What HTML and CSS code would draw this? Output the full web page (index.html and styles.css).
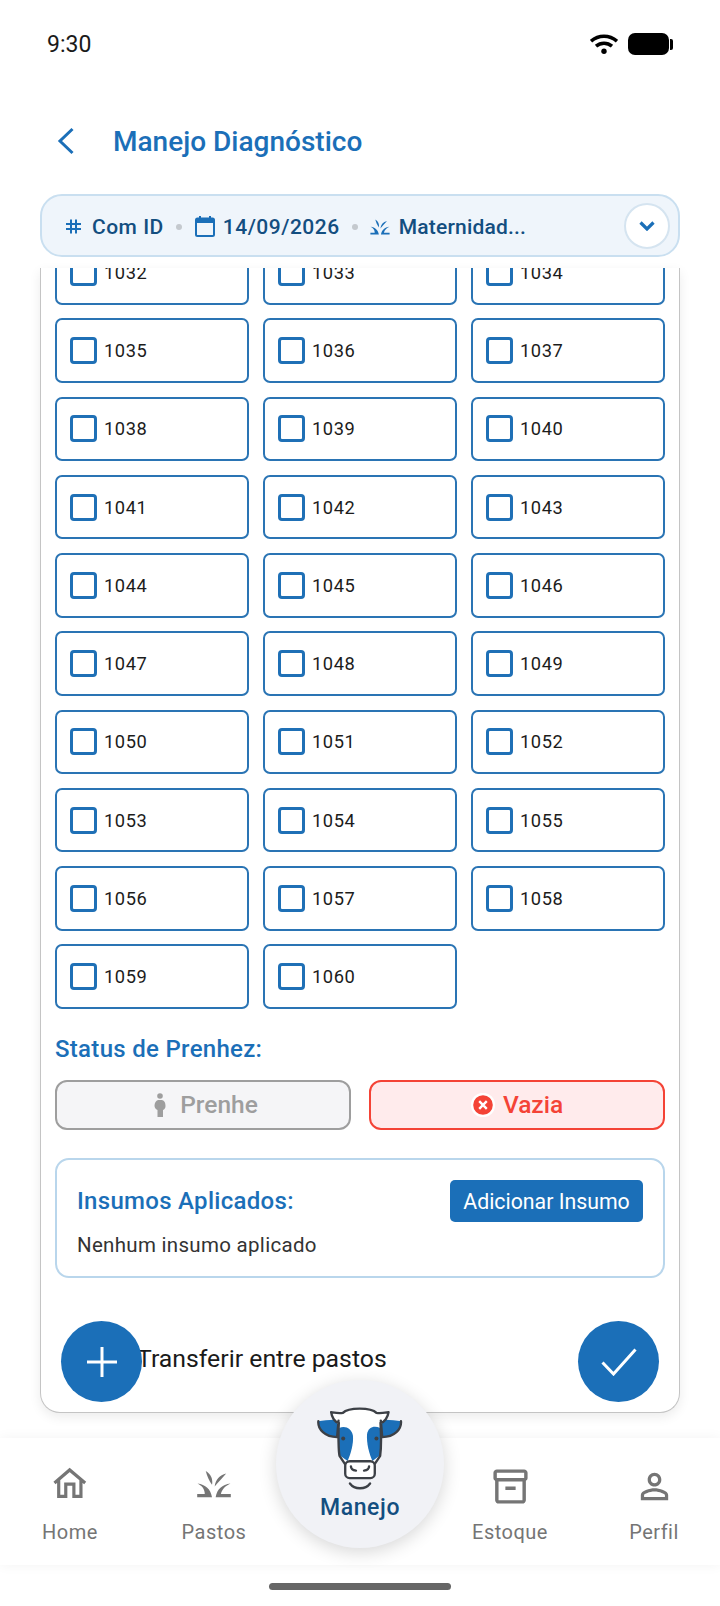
FILE: index.html
```html
<!DOCTYPE html>
<html lang="en">
<head>
    <meta charset="UTF-8">
    <meta name="viewport" content="width=device-width, initial-scale=1.0">
    <title>Manejo Diagnóstico</title>
    <link rel="stylesheet" href="styles.css">
</head>
<body>
    <svg class="defs" width="0" height="0">
        <symbol id="grass" viewBox="528 92 106 85">
            <path d="M531 133C555 136 571 150 575 175H530V165H553C553 150 545 140 531 133z"/>
            <path d="M631 133C606 136 590 150 586 175H632V165H602C605 150 616 140 631 133z"/>
            <path d="M556 95C572 105 578 120 575 137C566 125 560 110 556 95z"/>
            <path d="M618 103C598 108 586 122 583 142C595 128 608 115 618 103z"/>
        </symbol>
    </svg>

    <div class="status-bar">
        <span class="time">9:30</span>
        <div class="status-icons">
            <svg class="wifi" viewBox="0 0 28 20"><path d="M1 7.200C8.500.6 19.500.6 27 7.200"/><path d="M6 12.200C10.700 8.300 17.300 8.300 22 12.200"/><circle cx="14" cy="17.300" r="2.700"/></svg>
            <div class="battery"></div>
            <div class="battery-tip"></div>
        </div>
    </div>

    <header class="header">
        <svg class="back" viewBox="0 0 18 28"><path d="M15.500 2L3 14l12.500 12"/></svg>
        <h1>Manejo Diagnóstico</h1>
    </header>

    <div class="filter">
        <svg class="hash" viewBox="0 0 15 15"><path d="M5 0.500v14M10 0.500v14M0 5h15M0 10h15"/></svg>
        <span class="filter-text">Com ID</span>
        <span class="dot"></span>
        <svg class="calendar" viewBox="0 0 20 21"><path d="M5 0v3M15 0v3"/><rect x="1" y="2.500" width="18" height="17.500" rx="1.500"/><path class="calendar-top" d="M1 5h18"/></svg>
        <span class="filter-text">14/09/2026</span>
        <span class="dot dot-last"></span>
        <svg class="grass-small"><use href="#grass"/></svg>
        <span class="filter-text filter-place">Maternidad...</span>
        <button class="expand" type="button">
            <svg viewBox="0 0 16 10"><path d="M1.500 1.500L8 8l6.500-6.500"/></svg>
        </button>
    </div>

    <main class="card">
        <div class="animal-grid">
            <label class="animal"><span class="check"></span>1032</label>
            <label class="animal"><span class="check"></span>1033</label>
            <label class="animal"><span class="check"></span>1034</label>
            <label class="animal"><span class="check"></span>1035</label>
            <label class="animal"><span class="check"></span>1036</label>
            <label class="animal"><span class="check"></span>1037</label>
            <label class="animal"><span class="check"></span>1038</label>
            <label class="animal"><span class="check"></span>1039</label>
            <label class="animal"><span class="check"></span>1040</label>
            <label class="animal"><span class="check"></span>1041</label>
            <label class="animal"><span class="check"></span>1042</label>
            <label class="animal"><span class="check"></span>1043</label>
            <label class="animal"><span class="check"></span>1044</label>
            <label class="animal"><span class="check"></span>1045</label>
            <label class="animal"><span class="check"></span>1046</label>
            <label class="animal"><span class="check"></span>1047</label>
            <label class="animal"><span class="check"></span>1048</label>
            <label class="animal"><span class="check"></span>1049</label>
            <label class="animal"><span class="check"></span>1050</label>
            <label class="animal"><span class="check"></span>1051</label>
            <label class="animal"><span class="check"></span>1052</label>
            <label class="animal"><span class="check"></span>1053</label>
            <label class="animal"><span class="check"></span>1054</label>
            <label class="animal"><span class="check"></span>1055</label>
            <label class="animal"><span class="check"></span>1056</label>
            <label class="animal"><span class="check"></span>1057</label>
            <label class="animal"><span class="check"></span>1058</label>
            <label class="animal"><span class="check"></span>1059</label>
            <label class="animal"><span class="check"></span>1060</label>
        </div>

        <h2 class="section-title">Status de Prenhez:</h2>
        <div class="status-buttons">
            <button class="status-btn prenhe" type="button">
                <svg viewBox="-6 0 24 24"><circle cx="6" cy="3" r="2.800"/><path d="M4 7h4c2.500.5 3.500 3 3.500 6 0 2-1 3.500-2.500 4v7H3.500v-7C1.500 16 .5 14.500.5 12.500.5 10 2 7.500 4 7z"/></svg>
                Prenhe
            </button>
            <button class="status-btn vazia" type="button">
                <svg viewBox="-1 -1 24 24"><circle cx="11" cy="11" r="11"/><path d="M7.200 7.200l7.600 7.600M14.800 7.200l-7.600 7.600"/></svg>
                Vazia
            </button>
        </div>

        <section class="insumos">
            <div class="insumos-head">
                <h2 class="section-title">Insumos Aplicados:</h2>
                <button class="add-btn" type="button">Adicionar Insumo</button>
            </div>
            <p>Nenhum insumo aplicado</p>
        </section>

        <div class="transfer">Transferir entre pastos</div>

        <button class="fab fab-add" type="button">
            <svg viewBox="0 0 30 30"><path d="M15 0v30M0 15h30"/></svg>
        </button>
        <button class="fab fab-ok" type="button">
            <svg viewBox="0 0 36 28"><path d="M1.500 14.500L12.500 26 34.500 1.500"/></svg>
        </button>
    </main>

    <nav class="bottom-nav">
        <a class="nav-item">
            <svg class="nav-icon" viewBox="98 86 102 92"><path class="stroke" d="M105 132L148 95l44 37M117 122v48h20v-35h23v35h20v-48"/></svg>
            <span>Home</span>
        </a>
        <a class="nav-item">
            <svg class="nav-icon grass-icon"><use href="#grass"/></svg>
            <span>Pastos</span>
        </a>
        <span></span>
        <a class="nav-item">
            <svg class="nav-icon box-icon" viewBox="0 0 24 24"><path d="M20 2H4c-1 0-2 .9-2 2v3.010c0 .72.43 1.340 1 1.690V20c0 1.100 1.100 2 2 2h14c.9 0 2-.9 2-2V8.700c.57-.35 1-.97 1-1.690V4c0-1.100-1-2-2-2zm-1 18H5V9h14v11zm1-13H4V4h16v3zM9 12h6v2H9z"/></svg>
            <span>Estoque</span>
        </a>
        <a class="nav-item">
            <svg class="nav-icon box-icon" viewBox="0 0 24 24"><path d="M12 5.900c1.160 0 2.100.94 2.100 2.100s-.94 2.100-2.100 2.100S9.900 9.160 9.900 8s.94-2.100 2.100-2.100m0 9c2.970 0 6.100 1.460 6.100 2.100v1.100H5.900V17c0-.64 3.130-2.100 6.100-2.100M12 4C9.790 4 8 5.790 8 8s1.790 4 4 4 4-1.790 4-4-1.790-4-4-4zm0 9c-2.670 0-8 1.340-8 4v3h16v-3c0-2.660-5.330-4-8-4z"/></svg>
            <span>Perfil</span>
        </a>
    </nav>

    <a class="nav-center">
        <svg class="cow" viewBox="145 107 256 252">
            <path class="cow-ear" d="M206 148C190 146 165 150 149 152C147 175 168 200 206 199z"/>
            <path class="cow-ear" d="M338 148C354 146 379 150 395 152C397 175 376 200 338 199z"/>
            <path class="cow-head" d="M187 125C200 127 210 129 222 127C238 110 306 110 322 127C334 129 344 127 358 125C356 140 346 155 334 157C336 190 336 240 333 255L316 285H228L212 255C209 240 208 190 210 157C198 155 189 140 187 125z"/>
            <path class="cow-patch" d="M211 172C228 164 248 172 252 195C254 218 246 248 236 270L213 254C209 235 209 200 211 172z"/>
            <path class="cow-patch" d="M333 172C316 164 298 168 294 190C292 218 300 248 310 270L332 254C335 235 335 200 333 172z"/>
            <path class="cow-line" d="M210 157C208 190 209 240 212 255L230 282M334 157C336 190 335 240 333 255L315 282M187 125C200 127 210 129 222 127C238 110 306 110 322 127C334 129 344 127 358 125C356 140 346 155 334 157M187 125C189 140 198 155 210 157M149 152C147 175 168 200 207 199M395 152C397 175 376 200 337 199M209 150L205 197M335 150L339 197"/>
            <circle class="cow-eye" cx="223" cy="203" r="6"/>
            <circle class="cow-eye" cx="322" cy="203" r="6"/>
            <rect class="cow-muzzle" x="229" y="271" width="88" height="50" rx="13"/>
            <path class="cow-line" d="M246 286c0 8 6 12 15 13M300 286c0 8-6 12-15 13M243 337c14 19 46 19 60 0"/>
        </svg>
        <span>Manejo</span>
    </a>

    <div class="home-area"><div class="home-indicator"></div></div>
</body>
</html>
```

FILE: styles.css
```css
* {
    box-sizing: border-box;
}
body {
    font-family: Roboto, "Liberation Sans", sans-serif;
    background-color: #fff;
    margin: 0;
    width: 720px;
    height: 1606px;
    position: relative;
    overflow: hidden;
    display: flex;
    flex-direction: column;
}
h1, h2, p {
    margin: 0;
}
button {
    font-family: inherit;
    cursor: pointer;
}
.defs {
    position: absolute;
}

/* status bar */
.status-bar {
    height: 86px;
    flex: none;
    padding: 33px 47px 0 47px;
    display: flex;
    justify-content: space-between;
    align-items: flex-start;
}
.time {
    font-size: 23px;
    line-height: 23px;
    color: #1a1a1a;
}
.status-icons {
    display: flex;
    align-items: center;
}
.wifi {
    width: 28px;
    height: 20px;
    margin-right: 10px;
    fill: #000;
    stroke: none;
}
.wifi path {
    fill: none;
    stroke: #000;
    stroke-width: 3.600;
}
.battery {
    width: 41px;
    height: 22px;
    background-color: #000;
    border-radius: 7px;
}
.battery-tip {
    width: 3px;
    height: 11px;
    background-color: #000;
    border-radius: 0 2px 2px 0;
    margin-left: 1px;
}

/* header */
.header {
    height: 108px;
    flex: none;
    padding: 2px 0 0 57px;
    display: flex;
    align-items: center;
    gap: 38px;
}
.back {
    width: 18px;
    height: 28px;
    fill: none;
    stroke: #1b6fb8;
    stroke-width: 3;
}
.header h1 {
    font-size: 28px;
    font-weight: 500;
    color: #1b6fb8;
}

/* filter pill */
.filter {
    height: 63px;
    flex: none;
    margin: 0 40px;
    padding: 2px 10px 0 24px;
    background-color: #eff5fb;
    border: 2px solid #c9dff0;
    border-radius: 22px;
    display: flex;
    align-items: center;
    position: relative;
}
.hash {
    width: 15px;
    height: 15px;
    margin-right: 11px;
    fill: none;
    stroke: #1b6fb8;
    stroke-width: 2;
}
.filter-text {
    font-size: 21px;
    font-weight: 500;
    letter-spacing: 0.5px;
    color: #134e80;
}
.filter-place {
    letter-spacing: 0.2px;
}
.dot {
    width: 6px;
    height: 6px;
    border-radius: 50%;
    background-color: #c4c9ce;
    margin: 0 13px 0 12px;
}
.dot-last {
    margin-right: 12px;
}
.calendar {
    width: 20px;
    height: 21px;
    margin-right: 8px;
    fill: none;
    stroke: #1b6fb8;
    stroke-width: 2;
}
.calendar-top {
    stroke-width: 4;
}
.grass-small {
    width: 20px;
    height: 16px;
    margin-right: 9px;
    fill: #1b6fb8;
}
.expand {
    position: absolute;
    right: 8px;
    top: 7px;
    width: 46px;
    height: 46px;
    padding: 0;
    border-radius: 50%;
    background-color: #fff;
    border: 2px solid #d5e4f0;
    display: flex;
    align-items: center;
    justify-content: center;
}
.expand svg {
    width: 16px;
    height: 10px;
    fill: none;
    stroke: #1b6fb8;
    stroke-width: 3.200;
}

/* main card */
.card {
    height: 1145px;
    flex: none;
    margin: 11px 40px 0 40px;
    padding: 0 14px;
    background-color: #fff;
    border: 1px solid #c4c4c4;
    border-top: none;
    border-radius: 0 0 20px 20px;
    box-shadow: 0 4px 12px rgba(0, 0, 0, 0.08);
    overflow: hidden;
    position: relative;
}
.animal-grid {
    margin-top: -28px;
    display: grid;
    grid-template-columns: repeat(3, 194px);
    column-gap: 14px;
    row-gap: 13.750px;
}
.animal {
    height: 64.500px;
    padding-left: 13px;
    border: 2px solid #2a74b4;
    border-radius: 7px;
    display: flex;
    align-items: center;
    gap: 7px;
    font-size: 18.300px;
    letter-spacing: 0.6px;
    color: #1c1c1c;
}
.check {
    width: 27px;
    height: 27px;
    border: 3.500px solid #1f70b6;
    border-radius: 4px;
}
.section-title {
    font-size: 24px;
    font-weight: 500;
    letter-spacing: 0.3px;
    line-height: 28px;
    color: #1b6fb8;
}
.animal-grid + .section-title {
    margin-top: 26.500px;
}
.status-buttons {
    margin-top: 16.500px;
    display: flex;
    gap: 18px;
}
.status-btn {
    flex: 1;
    height: 50px;
    border-radius: 12px;
    font-size: 24.500px;
    font-weight: 500;
    display: flex;
    align-items: center;
    justify-content: center;
    gap: 8px;
}
.status-btn svg {
    width: 24px;
    height: 24px;
}
.prenhe {
    background-color: #f5f5f7;
    border: 2px solid #9e9e9e;
    color: #9e9e9e;
}
.prenhe svg {
    fill: #9e9e9e;
}
.vazia {
    background-color: #ffebec;
    border: 2px solid #f44336;
    color: #f44336;
}
.vazia svg {
    fill: #f44336;
    stroke: #fff;
    stroke-width: 2.400;
}
.insumos {
    margin-top: 28.500px;
    height: 120px;
    padding: 20px 20px 0 20px;
    border: 2px solid #b9d6ec;
    border-radius: 14px;
}
.insumos-head {
    display: flex;
    justify-content: space-between;
    align-items: center;
}
.add-btn {
    width: 193px;
    height: 42px;
    padding: 0;
    border: none;
    border-radius: 5px;
    background-color: #1b6fb8;
    color: #fff;
    font-size: 21.300px;
}
.insumos p {
    margin-top: 11px;
    font-size: 20.500px;
    line-height: 24px;
    letter-spacing: 0.3px;
    color: #333;
}
.transfer {
    margin-top: 66px;
    padding-left: 82px;
    font-size: 24.800px;
    line-height: 29px;
    color: #1a1a1a;
}
.fab {
    position: absolute;
    bottom: 10px;
    width: 81px;
    height: 81px;
    padding: 0;
    border: none;
    border-radius: 50%;
    background-color: #1b6fb8;
    display: flex;
    align-items: center;
    justify-content: center;
}
.fab svg {
    fill: none;
    stroke: #fff;
    stroke-width: 3;
}
.fab-add {
    left: 20px;
}
.fab-add svg {
    width: 30px;
    height: 30px;
}
.fab-ok {
    right: 20px;
}
.fab-ok svg {
    width: 36px;
    height: 28px;
}

/* bottom nav */
.bottom-nav {
    height: 127px;
    flex: none;
    margin-top: 25px;
    background-color: #fff;
    box-shadow: 0 0 12px rgba(0, 0, 0, 0.05);
    display: grid;
    grid-template-columns: 140px 148px 144px 156px 132px;
    position: relative;
}
.nav-item {
    padding-top: 28px;
    display: flex;
    flex-direction: column;
    align-items: center;
    font-size: 20px;
    letter-spacing: 0.5px;
    color: #757575;
}
.nav-item span {
    position: absolute;
    top: 82px;
}
.nav-icon {
    width: 36px;
    height: 34px;
    fill: #757575;
}
.stroke {
    fill: none;
    stroke: #757575;
    stroke-width: 9;
}
.grass-icon {
    margin-top: 4px;
    height: 28px;
}
.box-icon {
    width: 41px;
    height: 41px;
}
.nav-center {
    position: absolute;
    left: 276px;
    top: 1380px;
    width: 168px;
    height: 168px;
    border-radius: 50%;
    background-color: #f1f2f6;
    box-shadow: 0 4px 18px rgba(0, 0, 0, 0.16);
    display: flex;
    flex-direction: column;
    align-items: center;
    padding-top: 26px;
    color: #134e80;
    font-size: 23px;
    font-weight: 500;
}
.cow {
    width: 86px;
    height: 85px;
}
.nav-center span {
    margin-top: 3px;
    line-height: 27px;
    letter-spacing: 0.6px;
}
.cow-ear {
    fill: #1b6fb8;
}
.cow-head {
    fill: #fff;
}
.cow-patch {
    fill: #1b6fb8;
}
.cow-line {
    fill: none;
    stroke: #3c4046;
    stroke-width: 7;
    stroke-linecap: round;
    stroke-linejoin: round;
}
.cow-eye {
    fill: #3c4046;
}
.cow-muzzle {
    fill: #fff;
    stroke: #3c4046;
    stroke-width: 7;
}

/* gesture bar */
.home-area {
    flex: 1;
    display: flex;
    justify-content: center;
    padding-top: 18px;
}
.home-indicator {
    width: 182px;
    height: 7px;
    border-radius: 4px;
    background-color: #666;
}
```
